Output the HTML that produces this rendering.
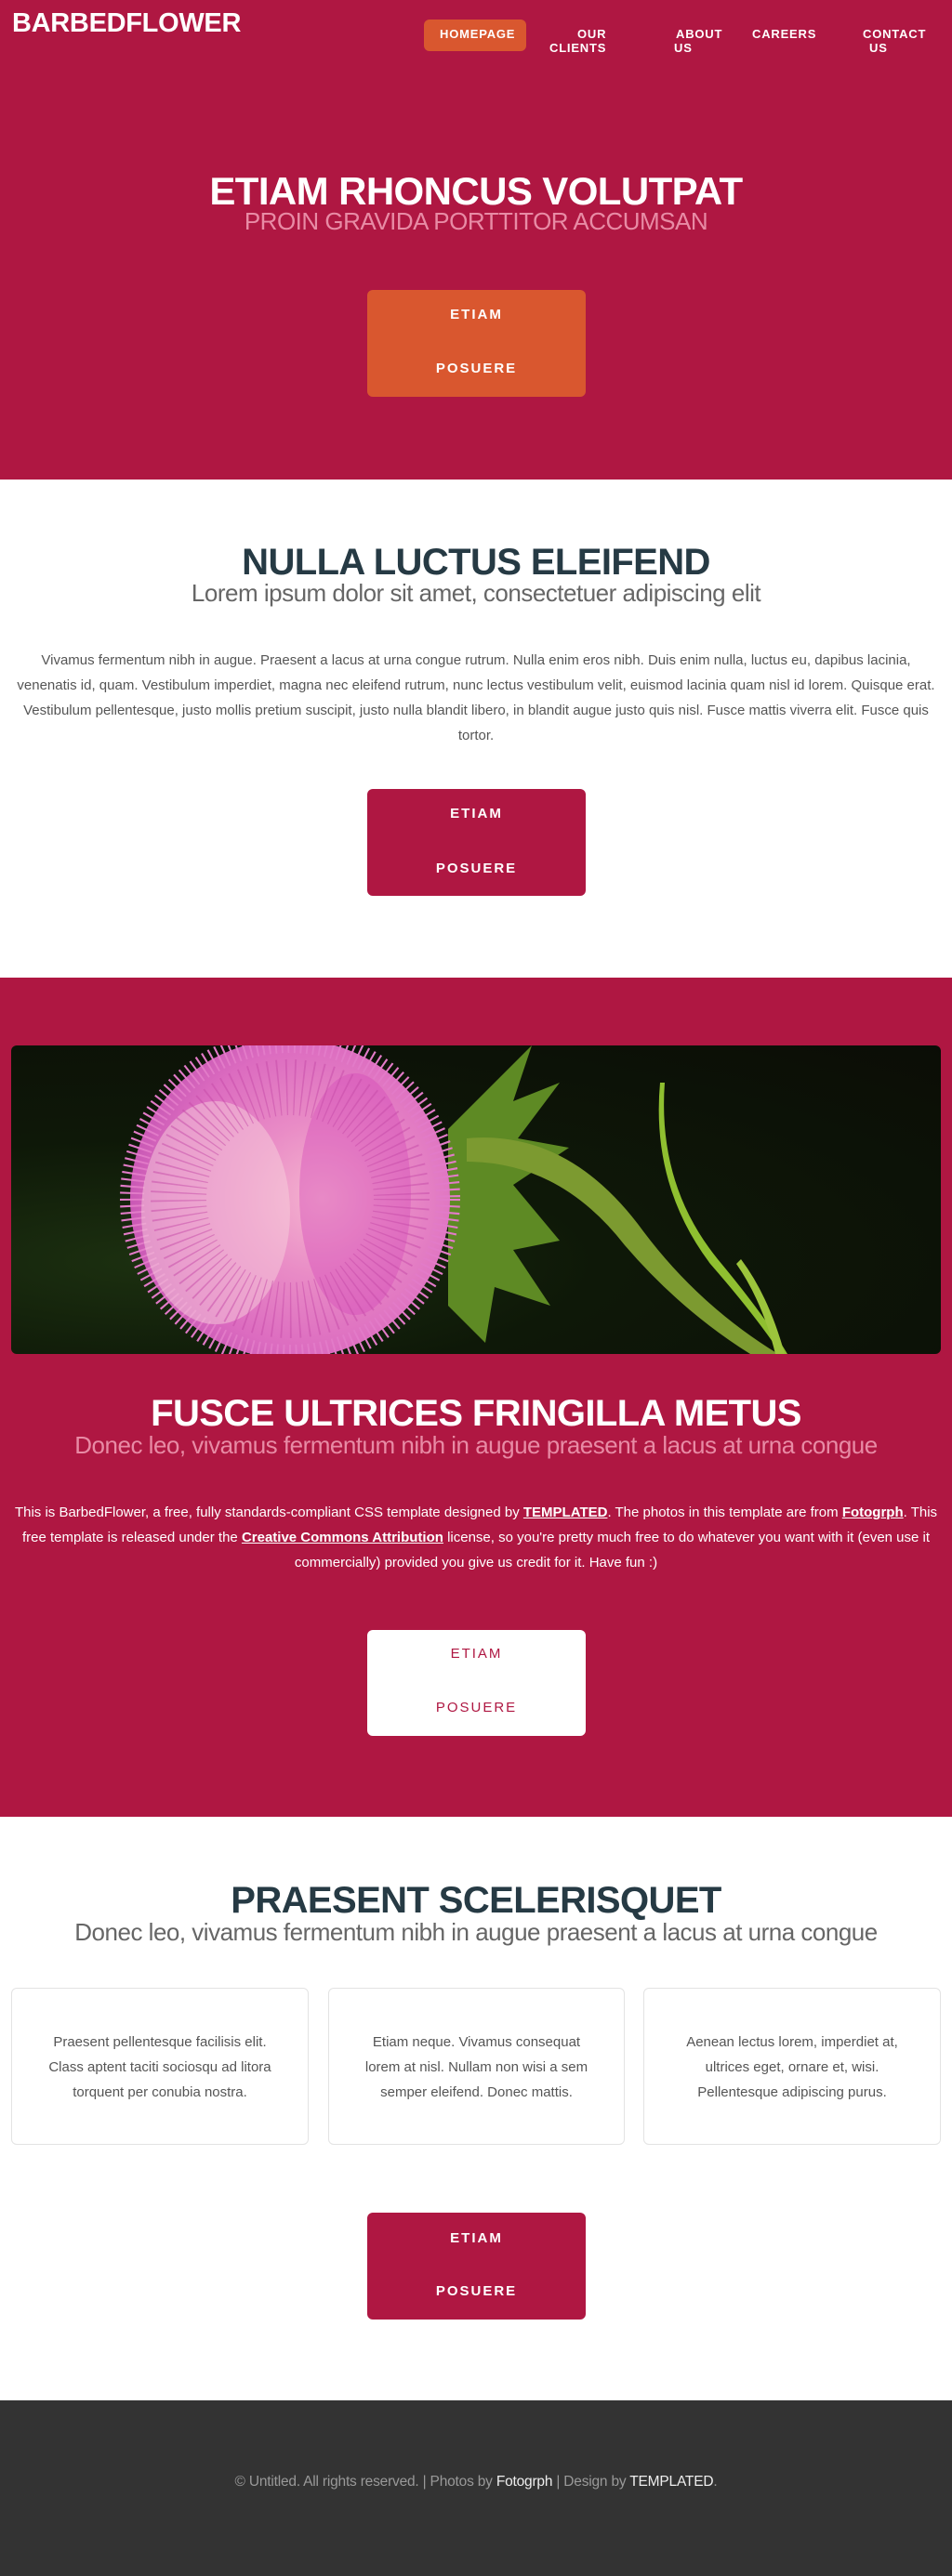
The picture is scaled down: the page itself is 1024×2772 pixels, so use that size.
<!DOCTYPE html>
<html><head><meta charset="utf-8"><style>
*{margin:0;padding:0;box-sizing:border-box}
body{width:1024px;height:2772px;position:relative;font-family:"Liberation Sans",Arial,sans-serif;background:#fff;overflow:hidden}
.a{position:absolute;white-space:nowrap}
.c{position:absolute;left:0;width:1024px;text-align:center;white-space:nowrap}
.nav{font-size:13px;font-weight:bold;color:#fff;letter-spacing:0.8px;line-height:15px}
.btn{position:absolute;left:395px;width:235px;border-radius:6px}
.bt{position:absolute;left:0;width:235px;text-align:center;font-size:15px;font-weight:bold;letter-spacing:2px;line-height:18px}
.h{letter-spacing:-0.6px}
.s{letter-spacing:-0.5px}
a{color:inherit}
</style></head><body>
<!-- hero -->
<div class="a" style="left:0;top:0;width:1024px;height:516px;background:#af1742"></div>
<div class="a" style="left:13px;top:9px;font-size:29px;font-weight:bold;color:#fff;letter-spacing:-0.3px;line-height:32px">BARBEDFLOWER</div>
<div class="a" style="left:456px;top:21px;width:110px;height:34px;background:#d9572f;border-radius:6px"></div>
<div class="a nav" style="left:473px;top:29px">HOMEPAGE</div>
<div class="a nav" style="left:621px;top:29px">OUR</div>
<div class="a nav" style="left:591px;top:44px">CLIENTS</div>
<div class="a nav" style="left:727px;top:29px">ABOUT</div>
<div class="a nav" style="left:725px;top:44px">US</div>
<div class="a nav" style="left:809px;top:29px">CAREERS</div>
<div class="a nav" style="left:928px;top:29px">CONTACT</div>
<div class="a nav" style="left:935px;top:44px">US</div>
<div class="c h" style="top:184px;font-size:42px;font-weight:bold;color:#fff;line-height:44px">ETIAM RHONCUS VOLUTPAT</div>
<div class="c s" style="top:224px;font-size:26px;color:#e88ba5;line-height:28px">PROIN GRAVIDA PORTTITOR ACCUMSAN</div>
<div class="btn" style="top:312px;height:115px;background:#d9572f"><div class="bt" style="top:18px;color:#fff">ETIAM</div><div class="bt" style="top:76px;color:#fff">POSUERE</div></div>
<!-- section 2 -->
<div class="c h" style="top:584px;font-size:40px;font-weight:bold;color:#263a44;line-height:42px">NULLA LUCTUS ELEIFEND</div>
<div class="c s" style="top:624px;font-size:26px;color:#666;line-height:28px">Lorem ipsum dolor sit amet, consectetuer adipiscing elit</div>
<div class="a" style="left:15px;top:697px;width:994px;white-space:normal;text-align:center;font-size:15px;line-height:27px;color:#555">Vivamus fermentum nibh in augue. Praesent a lacus at urna congue rutrum. Nulla enim eros nibh. Duis enim nulla, luctus eu, dapibus lacinia, venenatis id, quam. Vestibulum imperdiet, magna nec eleifend rutrum, nunc lectus vestibulum velit, euismod lacinia quam nisl id lorem. Quisque erat. Vestibulum pellentesque, justo mollis pretium suscipit, justo nulla blandit libero, in blandit augue justo quis nisl. Fusce mattis viverra elit. Fusce quis tortor.</div>
<div class="btn" style="top:849px;height:115px;background:#af1742"><div class="bt" style="top:18px;color:#fff">ETIAM</div><div class="bt" style="top:77px;color:#fff">POSUERE</div></div>
<!-- section 3 -->
<div class="a" style="left:0;top:1052px;width:1024px;height:903px;background:#af1742"></div>
<div class="a" style="left:12px;top:1125px;width:1000px;height:332px;border-radius:6px;overflow:hidden;background:radial-gradient(ellipse at 15% 70%,#1c3010 0%,#0e1808 40%,#0b0d06 100%)">
<svg width="1000" height="332" viewBox="0 0 1000 332">
<defs><radialGradient id="f" cx="0.6" cy="0.5" r="0.6"><stop offset="0" stop-color="#f5b5cf"/><stop offset="0.4" stop-color="#e98cc6"/><stop offset="0.8" stop-color="#dc6cc0"/><stop offset="1" stop-color="#c958b5"/></radialGradient></defs>
<path d="M470 90 L560 0 L540 60 L590 40 L545 100 L600 110 L540 150 L590 210 L540 220 L580 280 L520 260 L510 320 L470 280 Z" fill="#5e8a24"/>
<path d="M490 100 Q600 90 680 200 Q740 280 825 332 L795 332 Q720 285 660 215 Q590 125 490 125 Z" fill="#7c9a30"/>
<path d="M703 40 Q695 150 760 230 Q810 290 835 332 L828 332 Q800 290 752 235 Q688 150 698 40 Z" fill="#8fbf30"/>
<path d="M785 230 Q815 270 832 332 L822 332 Q808 275 780 235 Z" fill="#9cc43c"/>
<ellipse cx="300" cy="165" rx="172" ry="172" fill="url(#f)"/>
<circle cx="300" cy="165" r="170" fill="none" stroke="#e27bc8" stroke-width="26" stroke-dasharray="2 5"/>
<ellipse cx="220" cy="180" rx="80" ry="120" fill="#f8d0dc" opacity="0.5"/>
<ellipse cx="370" cy="160" rx="60" ry="130" fill="#d548b8" opacity="0.4"/>
<circle cx="300" cy="165" r="120" fill="none" stroke="#c64aa8" stroke-width="60" stroke-dasharray="1.5 7" opacity="0.5"/>
</svg></div>
<div class="c h" style="top:1500px;font-size:40px;font-weight:bold;color:#fff;line-height:42px">FUSCE ULTRICES FRINGILLA METUS</div>
<div class="c s" style="top:1541px;font-size:26px;color:#e88ba5;line-height:28px">Donec leo, vivamus fermentum nibh in augue praesent a lacus at urna congue</div>
<div class="a" style="left:15px;top:1614px;width:994px;white-space:normal;text-align:center;font-size:15px;line-height:27px;color:#fff">This is BarbedFlower, a free, fully standards-compliant CSS template designed by <a href="#"><b>TEMPLATED</b></a>. The photos in this template are from <a href="#"><b>Fotogrph</b></a>. This free template is released under the <a href="#"><b>Creative Commons Attribution</b></a> license, so you're pretty much free to do whatever you want with it (even use it commercially) provided you give us credit for it. Have fun :)</div>
<div class="btn" style="top:1754px;height:114px;background:#fff"><div class="bt" style="top:17px;color:#af1742;font-weight:normal">ETIAM</div><div class="bt" style="top:75px;color:#af1742;font-weight:normal">POSUERE</div></div>
<!-- section 4 -->
<div class="c h" style="top:2024px;font-size:40px;font-weight:bold;color:#263a44;line-height:42px">PRAESENT SCELERISQUET</div>
<div class="c s" style="top:2065px;font-size:26px;color:#666;line-height:28px">Donec leo, vivamus fermentum nibh in augue praesent a lacus at urna congue</div>
<div class="a" style="left:12px;top:2139px;width:320px;height:169px;border:1px solid #e3e3e3;border-radius:6px;white-space:normal;text-align:center;font-size:15px;line-height:27px;color:#555;padding:44px 36px 0">Praesent pellentesque facilisis elit. Class aptent taciti sociosqu ad litora torquent per conubia nostra.</div>
<div class="a" style="left:353px;top:2139px;width:319px;height:169px;border:1px solid #e3e3e3;border-radius:6px;white-space:normal;text-align:center;font-size:15px;line-height:27px;color:#555;padding:44px 38px 0">Etiam neque. Vivamus consequat lorem at nisl. Nullam non wisi a sem semper eleifend. Donec mattis.</div>
<div class="a" style="left:692px;top:2139px;width:320px;height:169px;border:1px solid #e3e3e3;border-radius:6px;white-space:normal;text-align:center;font-size:15px;line-height:27px;color:#555;padding:44px 40px 0">Aenean lectus lorem, imperdiet at, ultrices eget, ornare et, wisi. Pellentesque adipiscing purus.</div>
<div class="btn" style="top:2381px;height:115px;background:#af1742"><div class="bt" style="top:19px;color:#fff">ETIAM</div><div class="bt" style="top:76px;color:#fff">POSUERE</div></div>
<!-- footer -->
<div class="a" style="left:0;top:2583px;width:1024px;height:189px;background:#333"></div>
<div class="c" style="top:2661px;font-size:15.5px;color:#999;line-height:20px;letter-spacing:-0.2px">© Untitled. All rights reserved. | Photos by <span style="color:#eee">Fotogrph</span> | Design by <span style="color:#eee">TEMPLATED</span>.</div>
</body></html>
